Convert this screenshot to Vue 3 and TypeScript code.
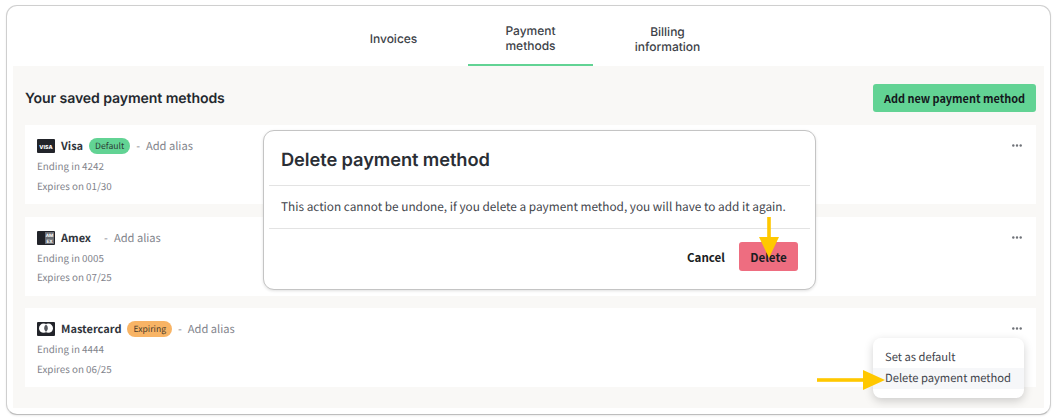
<script setup lang="ts">
interface Method { name: string; badge?: string; badgeClass?: string; ending: string; expires: string; brand: string }
const methods: Method[] = [
  { name: 'Visa', badge: 'Default', badgeClass: 'green', ending: '4242', expires: '01/30', brand: 'visa' },
  { name: 'Amex', ending: '0005', expires: '07/25', brand: 'amex' },
  { name: 'Mastercard', badge: 'Expiring', badgeClass: 'orange', ending: '4444', expires: '06/25', brand: 'mc' },
]
</script>

<template>
  <div class="page">
    <div class="shell">
      <nav class="tabs">
        <div class="tab">Invoices</div>
        <div class="tab active">Payment<br />methods</div>
        <div class="tab">Billing<br />information</div>
      </nav>
      <section class="panel">
        <header class="head">
          <h2>Your saved payment methods</h2>
          <button class="add">Add new payment method</button>
        </header>
        <div class="list">
          <article v-for="m in methods" :key="m.name" class="card">
            <div class="info">
              <div class="row">
                <svg class="brand" viewBox="0 0 18 14">
                  <rect width="18" height="14" rx="1" fill="#22242a" />
                  <template v-if="m.brand === 'visa'">
                    <text x="9" y="9.6" text-anchor="middle" class="vtext">VISA</text>
                  </template>
                  <template v-else-if="m.brand === 'amex'">
                    <rect x="8" y="1" width="9" height="12" fill="#6b6e75" />
                    <text x="12.5" y="6" text-anchor="middle" class="atext">AM</text>
                    <text x="12.5" y="11.5" text-anchor="middle" class="atext">EX</text>
                  </template>
                  <template v-else>
                    <circle cx="6.6" cy="6.2" r="4.6" fill="#fff" />
                    <circle cx="11.4" cy="6.2" r="4.6" fill="#fff" />
                    <path d="M9 2.5a4.6 4.6 0 0 1 0 7.4a4.6 4.6 0 0 1 0-7.4z" fill="#55585e" />
                  </template>
                </svg>
                <span class="name" :class="m.brand">{{ m.name }}</span>
                <span v-if="m.badge" class="badge" :class="m.badgeClass">{{ m.badge }}</span>
                <span class="alias"><span class="dash">-</span>Add alias</span>
              </div>
              <div class="sub">Ending in {{ m.ending }}</div>
              <div class="sub">Expires on {{ m.expires }}</div>
            </div>
            <svg class="dots" viewBox="0 0 10 3" width="10" height="3">
              <circle cx="1.3" cy="1.5" r="1.2" /><circle cx="5" cy="1.5" r="1.2" /><circle cx="8.7" cy="1.5" r="1.2" />
            </svg>
          </article>
        </div>
      </section>

      <div class="modal">
        <h3>Delete payment method</h3>
        <p>This action cannot be undone, if you delete a payment method, you will have to add it again.</p>
        <div class="actions">
          <button class="cancel">Cancel</button>
          <button class="delete">Delete</button>
        </div>
      </div>

      <div class="menu">
        <div class="item">Set as default</div>
        <div class="item hover">Delete payment method</div>
      </div>

      <svg class="arrow down" viewBox="0 0 20 41" width="20" height="41">
        <rect x="8.2" y="0" width="3.6" height="24" fill="#ffc800" />
        <path d="M0 20h20L10 41z" fill="#ffc800" />
      </svg>
      <svg class="arrow right" viewBox="0 0 68 20" width="68" height="20">
        <rect x="0" y="8.2" width="48" height="3.6" fill="#ffc800" />
        <path d="M46 0v20l22-10z" fill="#ffc800" />
      </svg>
    </div>
  </div>
</template>

<style>
html, body { margin: 0; background: #fff; }
</style>

<style scoped>
.page {
  width: 1060px;
  height: 420px;
  padding: 5px 9px 5px 6px;
  box-sizing: border-box;
  overflow: hidden;
  font-family: "Noto Sans CJK SC", "Noto Sans", sans-serif;
  color: #3a3f47;
  text-rendering: geometricPrecision;
}
.shell {
  position: relative;
  height: 410px;
  box-sizing: border-box;
  border: 1px solid #cfcfcf;
  border-bottom-color: #bdbdbd;
  border-radius: 11px;
  padding: 0 6px 6px;
  display: flex;
  flex-direction: column;
  box-shadow: 0 1px 2px rgba(0, 0, 0, .08);
  background: #fff;
}
.tabs {
  height: 60px;
  display: flex;
  justify-content: center;
  gap: 12px;
  padding-left: 4px;
  flex: none;
}
.tab {
  width: 125px;
  height: 60px;
  box-sizing: border-box;
  padding-top: 6px;
  display: flex;
  align-items: center;
  justify-content: center;
  text-align: center;
  font: 500 12px/15.5px Inter, sans-serif;
  color: #3d4248;
}
.tab.active { border-bottom: 2px solid #62d394; }
.panel {
  flex: 1;
  background: #f9f8f6;
  padding: 18px 8px 0 12px;
  display: flex;
  flex-direction: column;
}
.head {
  display: flex;
  justify-content: space-between;
  align-items: center;
  height: 28px;
  margin-bottom: 13px;
}
h2 {
  margin: 2px 0 0;
  font: 600 14.1px/20px Inter, sans-serif;
  color: #24282e;
  letter-spacing: -.1px;
}
.add {
  width: 163px;
  height: 28px;
  border: 0;
  border-radius: 3px;
  padding: 0;
  background: #62d394;
  color: #14181c;
  font: 600 10.9px/28px "Noto Sans CJK SC", sans-serif;
}
.list { display: flex; flex-direction: column; gap: 12.5px; }
.card {
  height: 79px;
  background: #fff;
  padding: 11px 14px 0 12px;
  box-sizing: border-box;
  display: flex;
  justify-content: space-between;
  align-items: flex-start;
}
.row {
  display: flex;
  align-items: center;
  height: 20px;
  margin-bottom: 1px;
}
.brand { width: 18px; height: 14px; margin-right: 6px; }
.vtext { font: 800 5.4px Inter, sans-serif; fill: #fff; }
.atext { font: 700 4.6px Inter, sans-serif; fill: #fff; }
.name {
  font-size: 11px;
  font-weight: 700;
  line-height: 20px;
  color: #30343b;
}
.name.amex { margin-right: 7px; }
.badge {
  margin-left: 6px;
  height: 16px;
  padding: 0 6px;
  border-radius: 8px;
  font-size: 8.6px;
  line-height: 16px;
  color: #2b3a33;
}
.badge.green { background: #62d394; }
.badge.orange { background: #f8b465; color: #4a3b2a; }
.alias { font-size: 11.1px; line-height: 20px; color: #7f838b; margin-left: 6px; }
.dash { margin-right: 6px; }
.sub {
  font-size: 9.8px;
  line-height: 19.5px;
  color: #7f838b;
}
.dots { margin-top: 8px; fill: #6f7278; }
.modal {
  position: absolute;
  left: 256px;
  top: 124px;
  width: 553px;
  height: 160px;
  box-sizing: border-box;
  background: #fff;
  border: 1px solid #c4c4c4;
  border-radius: 11px;
  box-shadow: 0 1px 3px rgba(0, 0, 0, .12);
  padding: 0 5px;
}
.modal h3 {
  margin: 0;
  height: 54px;
  padding-left: 12px;
  border-bottom: 1px solid #e3e3e3;
  font: 600 18.3px/58px Inter, sans-serif;
  color: #2a2e35;
  letter-spacing: -.1px;
}
.modal p {
  margin: 0;
  height: 42px;
  padding-left: 12px;
  border-bottom: 1px solid #e3e3e3;
  font-size: 11.8px;
  line-height: 42px;
  color: #3f444b;
  white-space: nowrap;
}
.actions {
  display: flex;
  justify-content: flex-end;
  align-items: center;
  gap: 14px;
  padding: 13px 12px 0 0;
}
.actions button {
  border: 0;
  padding: 0;
  font-size: 11.6px;
  font-weight: 700;
  font-family: inherit;
  color: #1a1d22;
}
.cancel { background: none; }
.delete {
  width: 59px;
  height: 29px;
  background: #ee6d80;
  border-radius: 3px;
}
.menu {
  position: absolute;
  left: 866px;
  top: 332px;
  width: 151px;
  height: 60px;
  box-sizing: border-box;
  background: #fff;
  border-radius: 8px;
  box-shadow: 0 3px 10px rgba(0, 0, 0, .18);
  padding-top: 9px;
  font-size: 11.2px;
  color: #3f444b;
}
.item { height: 21px; line-height: 21px; padding-left: 12px; white-space: nowrap; }
.item.hover { background: #f6f7f9; }
.arrow { position: absolute; }
.arrow.down { left: 752px; top: 211px; }
.arrow.right { left: 810px; top: 364px; }
</style>
